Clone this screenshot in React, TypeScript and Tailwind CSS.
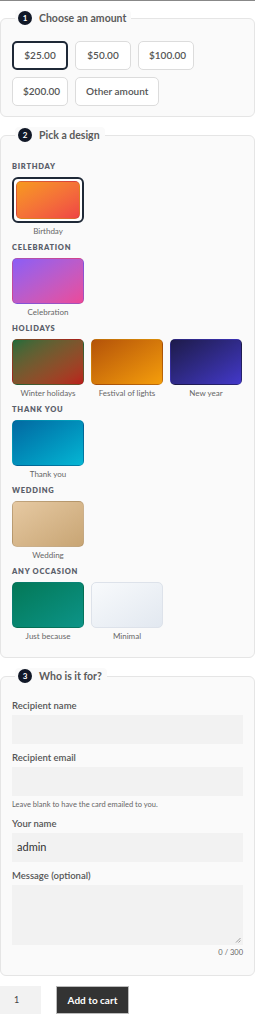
import { useState } from "react";

const amounts = ["$25.00", "$50.00", "$100.00", "$200.00", "Other amount"];

const groups = [
  {
    title: "Birthday",
    designs: [{ id: "birthday", label: "Birthday", bg: "bg-gradient-to-br from-[#f7991b] to-[#ef4444]" }],
  },
  {
    title: "Celebration",
    designs: [{ id: "celebration", label: "Celebration", bg: "bg-gradient-to-br from-[#8b5cf6] to-[#ec4899]" }],
  },
  {
    title: "Holidays",
    designs: [
      { id: "winter", label: "Winter holidays", bg: "bg-gradient-to-br from-[#1b6b3a] to-[#b91c1c]" },
      { id: "festival", label: "Festival of lights", bg: "bg-gradient-to-br from-[#b45309] to-[#f59e0b]" },
      { id: "newyear", label: "New year", bg: "bg-gradient-to-br from-[#1e1b4b] to-[#4338ca]" },
    ],
  },
  {
    title: "Thank you",
    designs: [{ id: "thanks", label: "Thank you", bg: "bg-gradient-to-br from-[#0369a1] to-[#06b6d4]" }],
  },
  {
    title: "Wedding",
    designs: [{ id: "wedding", label: "Wedding", bg: "bg-gradient-to-br from-[#e6c9a2] to-[#c8a574]" }],
  },
  {
    title: "Any occasion",
    designs: [
      { id: "because", label: "Just because", bg: "bg-gradient-to-br from-[#047857] to-[#0d9488]" },
      { id: "minimal", label: "Minimal", bg: "bg-gradient-to-br from-[#f8fafc] to-[#e2e8f0]" },
    ],
  },
];

function Legend({ n, children }: { n: number; children: React.ReactNode }) {
  return (
    <legend className="ml-[3px] flex items-center gap-[7px] rounded-sm bg-[#fafafa] px-[3px] py-[1px]">
      <span className="flex h-[14px] w-[14px] items-center justify-center rounded-full bg-[#111827] text-[8px] font-bold leading-none text-white">
        {n}
      </span>
      <span className="pr-[2px] text-[10.5px] font-bold leading-[14px] text-[#5a5a5a]">{children}</span>
    </legend>
  );
}

function Field({ label, value, className = "" }: { label: string; value?: string; className?: string }) {
  return (
    <div className={className}>
      <label className="mb-[3px] block text-[9.5px] font-semibold leading-[12px] text-[#555]">{label}</label>
      <div className="flex h-[29px] items-center bg-[#f2f2f2] px-[5px] text-[11px] text-[#333]">{value}</div>
    </div>
  );
}

export default function App() {
  const [amount, setAmount] = useState("$25.00");
  const [design, setDesign] = useState("birthday");

  return (
    <div className="min-h-[1024px] w-[255px] border-t border-[#888] bg-white font-['Lato',sans-serif] text-[#555]">
      <fieldset className="mt-[9px] rounded-md border border-[#e5e5e5] bg-[#fafafa] px-[11px] pb-[10px] pt-[15px]">
        <Legend n={1}>Choose an amount</Legend>
        <div className="flex flex-wrap gap-[7px]">
          {amounts.map((a) => (
            <button
              key={a}
              type="button"
              onClick={() => setAmount(a)}
              className={`h-[29px] rounded-[5px] bg-white px-[10px] text-[10px] font-semibold text-[#555] ${
                a === "Other amount" ? "" : "w-[56px]"
              } ${amount === a ? "border-2 border-[#1f2937]" : "border border-[#dcdcdc]"}`}
            >
              {a}
            </button>
          ))}
        </div>
      </fieldset>

      <fieldset className="mt-[10px] rounded-md border border-[#e5e5e5] bg-[#fafafa] px-[11px] pb-[15px] pt-[19px]">
        <Legend n={2}>Pick a design</Legend>
        <div className="flex flex-col gap-[6px]">
          {groups.map((g) => (
            <div key={g.title}>
              <div className="mb-[5px] text-[7.5px] font-extrabold uppercase leading-[10px] tracking-[0.1em] text-[#5a5f6b]">
                {g.title}
              </div>
              <div className="flex gap-[7px]">
                {g.designs.map((d) => (
                  <div key={d.id} className="flex w-[72px] flex-col items-center">
                    <button
                      type="button"
                      onClick={() => setDesign(d.id)}
                      className={`h-[46px] w-[72px] rounded-[6px] ${
                        design === d.id ? "border-2 border-[#1f2937] bg-white p-[2px]" : ""
                      }`}
                    >
                      <span
                        className={`block h-full w-full rounded-[5px] border ${
                          d.id === "minimal" ? "border-[#dde2ea]" : "border-black/10"
                        } ${d.bg}`}
                      />
                    </button>
                    <span className="mt-[2px] whitespace-nowrap text-[8px] leading-[12px] text-[#666]">{d.label}</span>
                  </div>
                ))}
              </div>
            </div>
          ))}
        </div>
      </fieldset>

      <fieldset className="mt-[10px] rounded-md border border-[#e5e5e5] bg-[#fafafa] px-[11px] pb-[17px] pt-[16px]">
        <Legend n={3}>Who is it for?</Legend>
        <Field label="Recipient name" />
        <Field label="Recipient email" className="mt-[8px]" />
        <p className="mt-[4px] text-[7.5px] leading-[10px] text-[#666]">Leave blank to have the card emailed to you.</p>
        <Field label="Your name" value="admin" className="mt-[8px]" />
        <div className="mt-[8px]">
          <label className="mb-[3px] block text-[9.5px] font-semibold leading-[12px] text-[#555]">Message (optional)</label>
          <div className="relative h-[60px] bg-[#f2f2f2]">
            <svg className="absolute bottom-[2px] right-[2px]" width="6" height="6" viewBox="0 0 6 6">
              <path d="M5.5 1 L1 5.5 M5.5 3.5 L3.5 5.5" stroke="#888" strokeWidth="0.8" />
            </svg>
          </div>
          <div className="mt-[3px] text-right text-[7.5px] leading-[10px] text-[#666]">0 / 300</div>
        </div>
      </fieldset>

      <div className="mt-[10px] flex items-center gap-[15px]">
        <div className="flex h-[28px] w-[41px] items-center bg-[#f2f2f2] pl-[14px] text-[9px] text-[#444]">1</div>
        <button
          type="button"
          className="h-[28px] w-[73px] border border-[#bbb] bg-[#333] text-[10px] font-bold text-white"
        >
          Add to cart
        </button>
      </div>
    </div>
  );
}
